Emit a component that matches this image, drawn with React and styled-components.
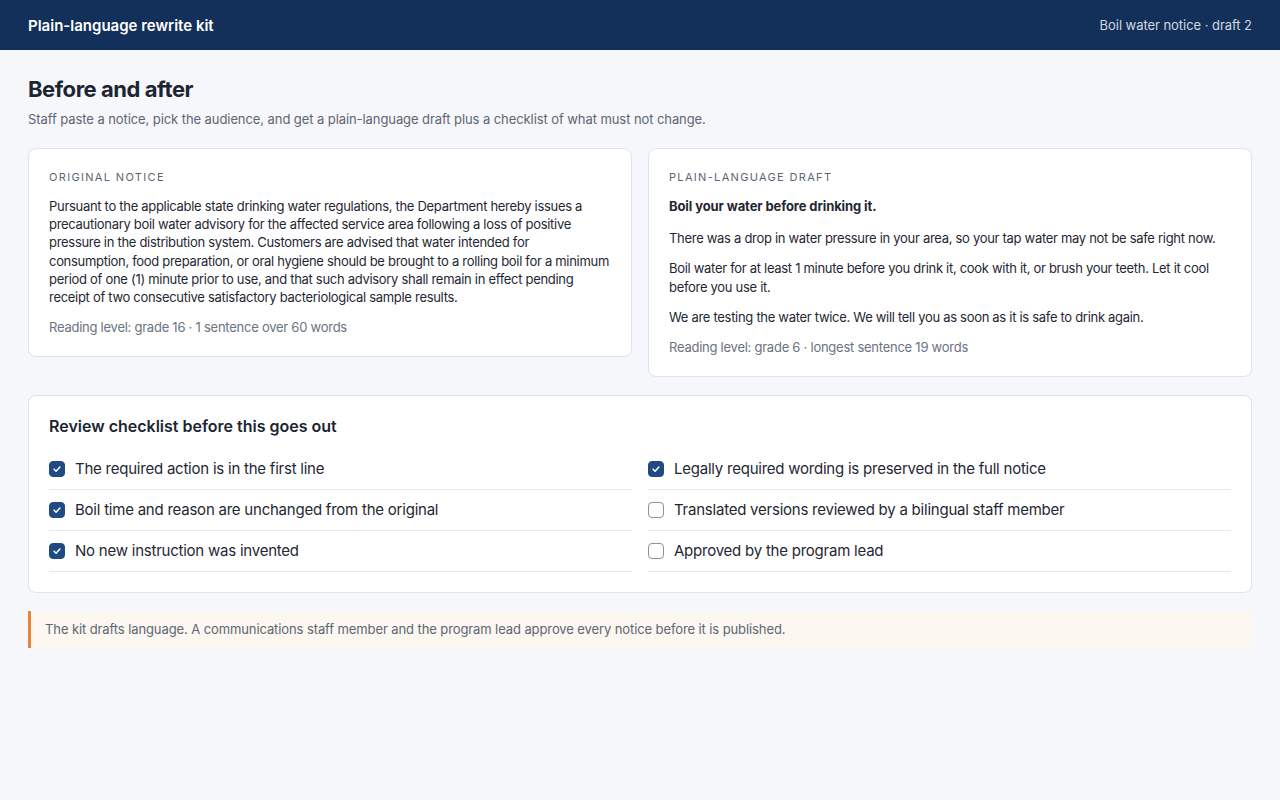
import React from 'react';
import styled, {createGlobalStyle} from 'styled-components';

const GlobalStyle = createGlobalStyle`
  * { box-sizing: border-box; }
  body {
    margin: 0;
    background: #f6f7fa;
    font-family: Inter, "Noto Sans", "Liberation Sans", sans-serif;
    color: #1f2733;
  }
`;

const TopBar = styled.header`
  height: 50px;
  background: #13305a;
  display: flex;
  align-items: center;
  justify-content: space-between;
  padding: 0 28px;
`;

const AppTitle = styled.div`
  color: #ffffff;
  font-size: 15px;
  font-weight: 600;
`;

const DocName = styled.div`
  color: rgba(255, 255, 255, 0.82);
  font-size: 13px;
  letter-spacing: -0.05px;
`;

const Main = styled.main`
  padding: 25px 28px;
`;

const Heading = styled.h1`
  margin: 0;
  font-size: 22px;
  line-height: 28px;
  font-weight: 700;
  letter-spacing: -0.45px;
  color: #1d2533;
`;

const Subtitle = styled.p`
  margin: 7px 0 20px;
  font-size: 13px;
  line-height: 18px;
  letter-spacing: -0.08px;
  color: #5d6673;
`;

const Columns = styled.div`
  display: grid;
  grid-template-columns: 1fr 1fr;
  gap: 16px;
  align-items: start;
`;

const Card = styled.section`
  background: #ffffff;
  border: 1px solid #dfe3ea;
  border-radius: 8px;
  padding: 20px;
`;

const Label = styled.div`
  font-size: 11px;
  line-height: 16px;
  letter-spacing: 1.33px;
  text-transform: uppercase;
  color: #5d6673;
  margin-bottom: 12px;
`;

const Body = styled.p`
  margin: 0 0 ${p => (p.$lead ? '14px' : '12px')};
  font-size: 13px;
  font-weight: ${p => (p.$lead ? 700 : 400)};
  line-height: 1.4;
  letter-spacing: ${p => (p.$lead ? '-0.1px' : '-0.3px')};
  color: #1f2733;
`;

const Meta = styled.div`
  font-size: 13px;
  line-height: 18px;
  letter-spacing: -0.25px;
  color: #6b7380;
`;

const ChecklistCard = styled(Card)`
  margin-top: 18px;
`;

const ChecklistTitle = styled.h2`
  margin: 0 0 13px;
  font-size: 16px;
  line-height: 20px;
  font-weight: 600;
  color: #1d2533;
`;

const CheckGrid = styled.div`
  display: grid;
  grid-template-columns: 1fr 1fr;
  column-gap: 16px;
`;

const CheckRow = styled.div`
  display: flex;
  align-items: center;
  gap: 10px;
  padding: 10px 0;
  border-bottom: 1px solid #e6e9ee;
  font-size: 15px;
  line-height: 20px;
  letter-spacing: -0.23px;
  color: #1f2733;
`;

const Box = styled.span`
  width: 16px;
  height: 16px;
  flex: none;
  border-radius: 4px;
  display: inline-flex;
  align-items: center;
  justify-content: center;
  background: ${p => (p.$checked ? '#1f4a82' : '#ffffff')};
  border: 1px solid ${p => (p.$checked ? '#1f4a82' : '#8a919c')};
`;

const Note = styled.div`
  margin-top: 18px;
  background: #fcf7f1;
  border-left: 3px solid #e8843a;
  padding: 10px 14px;
  font-size: 13px;
  line-height: 17px;
  letter-spacing: -0.1px;
  color: #5d6673;
`;

function CheckItem({checked, children}) {
    return (
        <CheckRow>
            <Box $checked={checked}>
                {checked && (
                    <svg width="10" height="10" viewBox="0 0 12 12" fill="none">
                        <path d="M2.5 6.2l2.4 2.4 4.6-5" stroke="#fff" strokeWidth="1.8"
                              strokeLinecap="round" strokeLinejoin="round"/>
                    </svg>
                )}
            </Box>
            {children}
        </CheckRow>
    );
}

const checks = [
    {text: 'The required action is in the first line', checked: true},
    {text: 'Legally required wording is preserved in the full notice', checked: true},
    {text: 'Boil time and reason are unchanged from the original', checked: true},
    {text: 'Translated versions reviewed by a bilingual staff member', checked: false},
    {text: 'No new instruction was invented', checked: true},
    {text: 'Approved by the program lead', checked: false},
];

export default function App() {
    return (
        <>
            <GlobalStyle/>
            <TopBar>
                <AppTitle>Plain-language rewrite kit</AppTitle>
                <DocName>Boil water notice · draft 2</DocName>
            </TopBar>
            <Main>
                <Heading>Before and after</Heading>
                <Subtitle>
                    Staff paste a notice, pick the audience, and get a plain-language draft plus a checklist of what must not change.
                </Subtitle>
                <Columns>
                    <Card>
                        <Label>Original notice</Label>
                        <Body>
                            Pursuant to the applicable state drinking water regulations, the Department hereby issues a
                            precautionary boil water advisory for the affected service area following a loss of positive
                            pressure in the distribution system. Customers are advised that water intended for
                            consumption, food preparation, or oral hygiene should be brought to a rolling boil for a minimum
                            period of one (1) minute prior to use, and that such advisory shall remain in effect pending
                            receipt of two consecutive satisfactory bacteriological sample results.
                        </Body>
                        <Meta>Reading level: grade 16 · 1 sentence over 60 words</Meta>
                    </Card>
                    <Card>
                        <Label>Plain-language draft</Label>
                        <Body $lead>Boil your water before drinking it.</Body>
                        <Body>There was a drop in water pressure in your area, so your tap water may not be safe right now.</Body>
                        <Body>Boil water for at least 1 minute before you drink it, cook with it, or brush your teeth. Let it cool before you use it.</Body>
                        <Body>We are testing the water twice. We will tell you as soon as it is safe to drink again.</Body>
                        <Meta>Reading level: grade 6 · longest sentence 19 words</Meta>
                    </Card>
                </Columns>
                <ChecklistCard>
                    <ChecklistTitle>Review checklist before this goes out</ChecklistTitle>
                    <CheckGrid>
                        {checks.map(c => (
                            <CheckItem key={c.text} checked={c.checked}>{c.text}</CheckItem>
                        ))}
                    </CheckGrid>
                </ChecklistCard>
                <Note>
                    The kit drafts language. A communications staff member and the program lead approve every notice before it is published.
                </Note>
            </Main>
        </>
    );
}
